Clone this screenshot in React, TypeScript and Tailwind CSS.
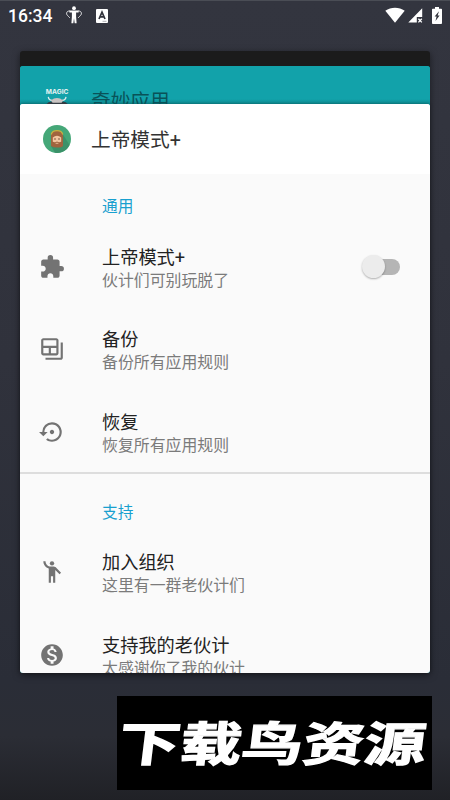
import type { ReactNode } from 'react';
import {
    MdExtension,
    MdOutlineBackupTable,
    MdSettingsBackupRestore,
    MdEmojiPeople,
    MdMonetizationOn,
} from 'react-icons/md';

interface SettingRowProps {
    icon: ReactNode;
    title: string;
    summary: string;
    action?: ReactNode;
}

function StatusBar() {
    return (
        <div className="flex h-[31px] shrink-0 items-center pl-2 pr-2 text-white">
            <span className="w-[58px] font-[Roboto] text-[17.5px] font-medium leading-none">16:34</span>
            <svg className="-mt-[3px] h-[18px] w-[16px]" viewBox="0 0 16 18">
                <circle cx="8" cy="2.2" r="1.9" fill="white" />
                <path d="M3.4 4.6h9.2v2h-2.5v4l.5 6.6H8.7L8 12.2l-.7 5H5.4l.5-6.6v-4H3.4z" fill="white" />
                <path d="M4 5C1.5 4.8.4 6.2.6 7.8c.2 1.5 1.7 2.2 3.2 4M12 5c2.5-.2 3.6 1.2 3.4 2.8-.2 1.5-1.7 2.2-3.2 4" fill="none" stroke="#e4e4e6" strokeWidth="1" />
            </svg>
            <svg className="-mt-[2px] ml-[14px] h-[14px] w-[12px]" viewBox="0 0 12 14">
                <rect width="12" height="14" rx="1" fill="white" />
                <path d="M3 10L6 3.2 9 10M4.3 7.9h3.4" fill="none" stroke="#31333c" strokeWidth="1.7" />
                <path d="M6.5 12.3h4" stroke="#9a9ba0" strokeWidth=".8" />
            </svg>
            <div className="-mt-[3px] ml-auto flex items-center">
                <svg className="h-[16px] w-[20px]" viewBox="0 0 20 16">
                    <path d="M.3 3.7C6-.4 14-.4 19.7 3.7L10 15.8z" fill="white" />
                </svg>
                <svg className="ml-[3px] h-[15px] w-[15px]" viewBox="0 0 15 15">
                    <path d="M14.2.3v8.6H8.8v5.7H.3z" fill="white" />
                    <path d="M10.4 10.8l3.4 3.6M13.8 10.8l-3.4 3.6" stroke="white" strokeWidth="1.3" />
                </svg>
                <svg className="ml-[9px] h-[17px] w-[10px]" viewBox="0 0 10 17">
                    <path d="M3 0h4v1.8h2.2q.8 0 .8.8V16q0 1-.8 1H.8Q0 17 0 16V2.6q0-.8.8-.8H3z" fill="white" />
                    <path d="M7 4.3L2.6 9.4h2L3.5 14 7.6 8.5h-2z" fill="#30323b" />
                </svg>
            </div>
        </div>
    );
}

function ModeAvatar() {
    return (
        <svg className="h-7 w-7 shrink-0" viewBox="0 0 28 28">
            <circle cx="14" cy="14" r="14" fill="#45a778" />
            <path d="M19 8l7.6 12A14 14 0 0 1 12 27.8L8 21z" fill="#3b9169" />
            <path d="M8 21V11c0-7 12-7 12 0v10q-2 2-5 1.5-4 .5-7-1.5z" fill="#a0643f" />
            <path d="M8.2 9.5C9.4 4.4 18.6 4.4 19.8 9.5" fill="none" stroke="#c9b13f" strokeWidth="1.2" />
            <path d="M9.8 12.4q4.2-3.4 8.4 0v3.9q0 3-4.2 3t-4.2-3z" fill="#f2c5a0" />
            <path d="M9.8 16.8q2.1 1 4.2-.3 2.1 1.3 4.2.3v1.6q-1.6 3.3-4.2 3.3t-4.2-3.3z" fill="#a0643f" />
            <path d="M12.6 18.3h2.8" stroke="#efc29b" strokeWidth=".9" />
            <circle cx="12" cy="14" r=".7" fill="#553222" />
            <circle cx="16" cy="14" r=".7" fill="#553222" />
        </svg>
    );
}

function MagicLogo() {
    return (
        <svg className="mt-[22px] h-7 w-7 shrink-0" viewBox="0 0 28 28">
            <text x="2.8" y="6.3" textLength="22.6" lengthAdjust="spacingAndGlyphs" className="font-[Inter] text-[6.6px] font-bold" fill="#e2f1f1">MAGIC</text>
            <path d="M5.3 8.8q.4 3.3 4 3.6M23 8.8q-.4 3.3-4 3.6" fill="none" stroke="#dceaea" strokeWidth="1.3" />
            <path d="M3.2 17q1-3.5 5.4-3.6h11q4.4.1 5.4 3.6z" fill="#343b42" />
            <path d="M7.8 12.4q6.2-4.6 12.4 0l-1.6 2.4h-9z" fill="#c9c4c3" />
        </svg>
    );
}

function OffSwitch() {
    return (
        <div className="relative ml-auto mr-[30px] mt-[13px] h-4 w-[36px] rounded-full">
            <div className="ml-2 h-4 w-7 rounded-full bg-[#b5b5b5]" />
            <div className="absolute -left-[2px] -top-[4px] h-[23px] w-[23px] rounded-full bg-[#ececec] shadow-[0_1px_2px_rgba(0,0,0,0.3)]" />
        </div>
    );
}

function SettingRow({ icon, title, summary, action }: SettingRowProps) {
    return (
        <div className="flex h-[82.5px] shrink-0">
            <div className="mt-[8px] w-[82px] shrink-0 pl-[19px] text-[26px] text-[#737373]">{icon}</div>
            <div className="whitespace-nowrap">
                <p className="text-[18.2px] leading-6 text-[#222222]">{title}</p>
                <p className="text-[15.9px] leading-[22px] text-[#7b7b7b]">{summary}</p>
            </div>
            {action}
        </div>
    );
}

function SectionLabel({ children }: { children: ReactNode }) {
    return <h2 className="pl-[82px] text-[15.7px] leading-6 text-[#18a0cf]">{children}</h2>;
}

export default function App() {
    return (
        <div className="relative flex h-[800px] w-[450px] flex-col overflow-hidden border-t border-[#4a4d55] bg-[linear-gradient(#33353f_0%,#30323c_45%,#2a2d37_85%,#2b2d35_92%,#202126_100%)] font-[Roboto,'Noto_Sans_CJK_SC',sans-serif]">
            <StatusBar />

            {/* stacked recent cards */}
            <div className="mx-5 mt-[19px] h-[622px] shrink-0 overflow-visible rounded-[3px] bg-[#1b1b1b] pt-[15px] shadow-[0_2px_7px_rgba(0,0,0,0.5)]">
                <div className="h-[607px] rounded-[3px] bg-[#12a2aa]">
                    <div className="flex h-[38px] overflow-hidden rounded-t-[3px] bg-[linear-gradient(#12a2aa_86%,#0f9299_100%)] pl-[23px]">
                        <MagicLogo />
                        <span className="ml-5 mt-[22px] text-[19.7px] leading-7 text-[#095258]">奇妙应用</span>
                    </div>
                    <main className="flex h-[569px] flex-col overflow-hidden rounded-[3px] bg-[#fafafa] shadow-[0_-1px_3px_rgba(0,0,0,0.25)]">
                        <header className="flex h-[70px] shrink-0 items-center gap-5 bg-white pl-[23px]">
                            <ModeAvatar />
                            <h1 className="pt-[3px] text-[19.7px] leading-7 text-[#333333]">上帝模式+</h1>
                        </header>

                        <section className="h-[300px] shrink-0 border-b-2 border-[#dddddd] pt-[21px]">
                            <SectionLabel>通用</SectionLabel>
                            <div className="pt-[26.5px]">
                                <SettingRow icon={<MdExtension />} title="上帝模式+" summary="伙计们可别玩脱了" action={<OffSwitch />} />
                                <SettingRow icon={<MdOutlineBackupTable />} title="备份" summary="备份所有应用规则" />
                                <SettingRow icon={<MdSettingsBackupRestore />} title="恢复" summary="恢复所有应用规则" />
                            </div>
                        </section>

                        <section className="pt-[27px]">
                            <SectionLabel>支持</SectionLabel>
                            <div className="pt-[26px]">
                                <SettingRow icon={<MdEmojiPeople />} title="加入组织" summary="这里有一群老伙计们" />
                                <SettingRow icon={<MdMonetizationOn />} title="支持我的老伙计" summary="太感谢你了我的伙计" />
                            </div>
                        </section>
                    </main>
                </div>
            </div>

            {/* site banner */}
            <div className="ml-[117px] mt-[23px] flex h-[94px] w-[315px] shrink-0 items-center justify-center bg-black">
                <svg className="h-[94px] w-[315px]" viewBox="0 0 315 94">
                    <text
                        x="0"
                        y="0"
                        transform="translate(0 65) skewX(-7) scale(1 .82)"
                        textLength="307"
                        lengthAdjust="spacingAndGlyphs"
                        className="font-['Noto_Sans_CJK_SC',sans-serif] text-[57px] font-bold"
                        fill="white"
                        stroke="white"
                        strokeWidth="1.6"
                    >
                        下载鸟资源
                    </text>
                </svg>
            </div>
        </div>
    );
}
